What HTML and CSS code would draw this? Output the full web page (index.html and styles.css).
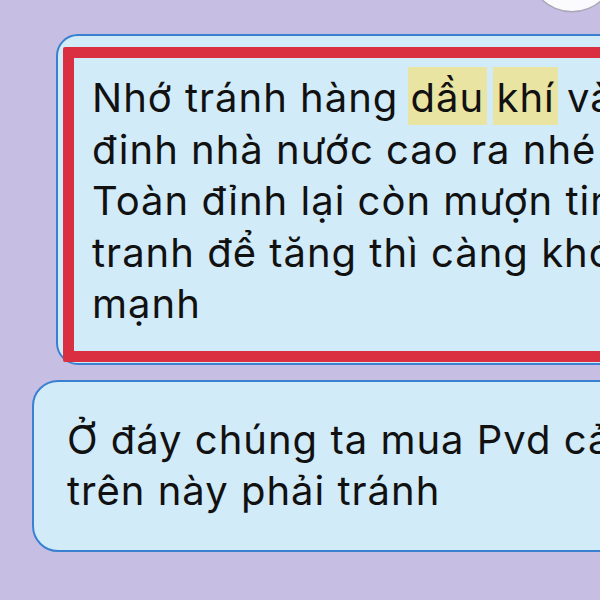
FILE: index.html
```html
<!DOCTYPE html>
<html lang="vi">
<head>
  <meta charset="UTF-8">
  <meta name="viewport" content="width=device-width, initial-scale=1.0">
  <title>Tin nhắn</title>
  <link rel="stylesheet" href="styles.css">
</head>
<body>
  <div class="avatar"></div>

  <div class="chat">
    <div class="bubble first">
      <div class="mark"></div>
      <p>Nhớ tránh hàng <span class="hl">dầu</span> <span class="hl">khí</span> và<br>
      đinh nhà nước cao ra nhé<br>
      Toàn đỉnh lại còn mượn tin<br>
      tranh để tăng thì càng khó<br>
      mạnh</p>
    </div>

    <div class="bubble second">
      <p>Ở đáy chúng ta mua Pvd cả<br>
      trên này phải tránh</p>
    </div>
  </div>
</body>
</html>
```

FILE: styles.css
```css
* { box-sizing: border-box; }
html, body {
  margin: 0;
  padding: 0;
  height: 100%;
  overflow: hidden;
}
body {
  background: #c7bfe3;
  font-family: Inter, "Noto Sans", sans-serif;
  color: #111;
  position: relative;
}
.avatar {
  position: absolute;
  left: 529px;
  top: -75px;
  width: 86px;
  height: 86px;
  border-radius: 50%;
  background: #fbfbfd;
  box-shadow: 0 0 0 1.5px #a9a6b6;
}
.chat {
  display: flex;
  flex-direction: column;
  padding-top: 34px;
  white-space: nowrap;
}
.bubble {
  position: relative;
  width: 720px;
  background: #d2ebf9;
  border: 2.5px solid #3a80d0;
}
.bubble p {
  margin: 0;
  font-size: 40px;
  line-height: 51.5px;
  letter-spacing: 1px;
}
.first {
  margin-left: 56px;
  border-radius: 22px;
  padding: 36px 0 33px 34px;
}
.second {
  margin-left: 32px;
  margin-top: 15px;
  border-radius: 26px;
  padding: 32px 0 33px 33px;
}
.mark {
  position: absolute;
  left: 5px;
  top: 11px;
  width: 700px;
  height: 315px;
  border: 11px solid #d92f40;
  border-radius: 2px;
}
.hl {
  background: #e9e4a1;
  padding: 6px 3px 3px;
  margin: 0 -3px;
}
```
